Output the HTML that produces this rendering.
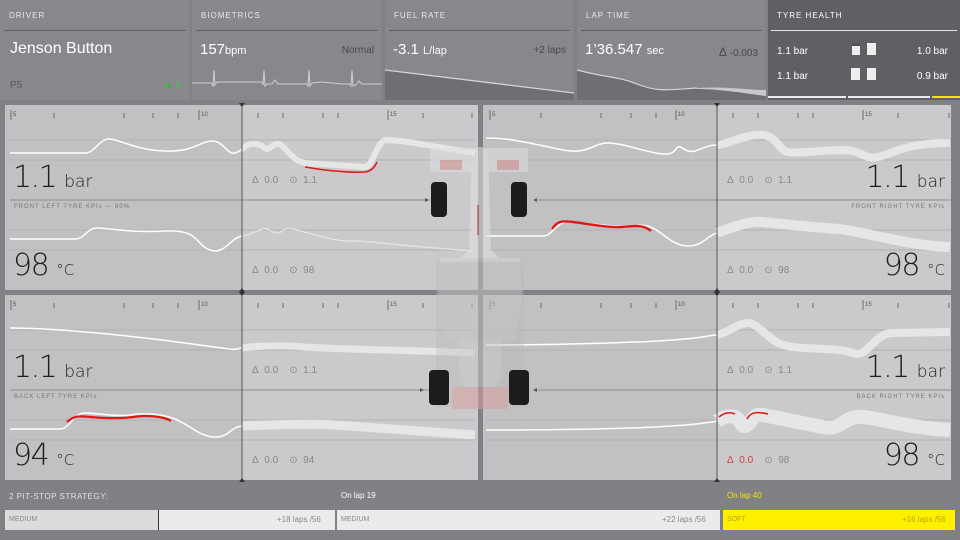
<!DOCTYPE html>
<html><head><meta charset="utf-8"><style>
*{margin:0;padding:0;box-sizing:border-box}
body{width:960px;height:540px;background:#808184;font-family:"Liberation Sans","DejaVu Sans",sans-serif;position:relative;overflow:hidden;color:#fff}
.a{position:absolute;white-space:nowrap}
.hd{position:absolute;top:0;height:100px;background:#87888b}
.hl{position:absolute;left:4px;right:4px;top:30px;height:1px;background:#606164}
.lab{position:absolute;left:9px;top:11px;font-size:8px;letter-spacing:1px;color:#e8e8e8}
.g{color:#1e1e1e;font-weight:200;font-family:"DejaVu Sans","Liberation Sans",sans-serif;letter-spacing:-1.5px}
.g span{letter-spacing:0}
</style></head><body>

<!-- header -->
<div class="hd" style="left:0;width:190px"><div class="hl"></div><div class="lab">DRIVER</div>
<div class="a" style="left:10px;top:40px;font-size:16px">Jenson Button</div>
<div class="a" style="left:10px;top:80px;font-size:10px;color:#5a5a5c">P5</div>
<div class="a" style="left:164px;top:80px;font-size:9px;color:#28c028">▲ <span style="color:#3bd03b">4</span></div></div>
<div class="hd" style="left:192px;width:190px"><div class="hl"></div><div class="lab">BIOMETRICS</div>
<div class="a" style="left:8px;top:41px;font-size:15px">157<span style="font-size:11px">bpm</span></div>
<div class="a" style="right:8px;top:45px;font-size:10px;color:#4a4a4c">Normal</div>
<svg class="a" style="left:0;top:65px" width="190" height="30"><path d="M0,18 L20,18 L21,22 L22,5 L23,20 L25,17 L70,17 L71,20 L72,5 L73,21 L75,19 L80,19 L83,15 L86,19 L115,19 L116,21 L117,5 L118,21 L120,18 L130,17 L150,19 L158,19 L159,21 L160,5 L161,21 L164,20 L167,16 L170,19 L190,19" fill="none" stroke="#cfcfd1" stroke-width="1"/></svg></div>
<div class="hd" style="left:385px;width:189px"><div class="hl"></div><div class="lab">FUEL RATE</div>
<div class="a" style="left:8px;top:41px;font-size:15px">-3.1 <span style="font-size:11px">L/lap</span></div>
<div class="a" style="right:8px;top:45px;font-size:10px;color:#4a4a4c">+2 laps</div>
<svg class="a" style="left:0;top:68px" width="189" height="32"><path d="M0,2 L189,25 L189,32 L0,32Z" fill="#6e6f72"/><path d="M0,2 L189,25" stroke="#d5d5d7" stroke-width="1.3"/></svg></div>
<div class="hd" style="left:577px;width:189px"><div class="hl"></div><div class="lab">LAP TIME</div>
<div class="a" style="left:8px;top:41px;font-size:15px">1’36.547 <span style="font-size:11px">sec</span></div>
<div class="a" style="right:8px;top:45px;font-size:10px;color:#4a4a4c"><span style="font-size:12px">Δ</span> -0.003</div>
<svg class="a" style="left:0;top:68px" width="189" height="32"><path d="M0,2 C30,10 40,8 60,16 S90,22 120,20 S160,24 189,28 L189,32 L0,32Z" fill="#6e6f72"/><path d="M120,20 C150,18 170,22 189,22 L189,28 C160,24 140,21 120,21Z" fill="#c9c9cb"/><path d="M0,2 C30,10 40,8 60,16 S90,22 120,20" fill="none" stroke="#d5d5d7" stroke-width="1.2"/></svg></div>
<div class="hd" style="left:768px;width:192px;background:#5f6063"><div class="hl" style="background:#e5e5e5;left:3px;right:3px"></div><div class="lab" style="color:#fff">TYRE HEALTH</div>
<div class="a" style="left:9px;top:46px;font-size:10px">1.1 bar</div><div class="a" style="right:12px;top:46px;font-size:10px">1.0 bar</div>
<div class="a" style="left:9px;top:71px;font-size:10px">1.1 bar</div><div class="a" style="right:12px;top:71px;font-size:10px">0.9 bar</div>
<div class="a" style="left:84px;top:43px;width:8px;height:12px;background:#eee;border-top:3px solid #555"></div>
<div class="a" style="left:99px;top:43px;width:9px;height:12px;background:#eee"></div>
<div class="a" style="left:83px;top:68px;width:9px;height:12px;background:#eee"></div>
<div class="a" style="left:99px;top:68px;width:9px;height:12px;background:#eee"></div>
<div class="a" style="left:0;top:96px;width:78px;height:2px;background:#eee"></div>
<div class="a" style="left:80px;top:96px;width:82px;height:2px;background:#eee"></div>
<div class="a" style="left:164px;top:96px;width:28px;height:2px;background:#f2e600"></div></div>

<!-- middle -->
<svg class="a" style="left:0;top:0" width="960" height="540">
<defs>
<clipPath id="cl"><rect x="0" y="0" width="237" height="200"/></clipPath>
<clipPath id="cr"><rect x="237" y="0" width="300" height="200"/></clipPath>
<clipPath id="rl"><rect x="0" y="0" width="234" height="200"/></clipPath>
<clipPath id="rr"><rect x="234" y="0" width="300" height="200"/></clipPath>
<g id="gridL">
<rect x="0" y="0" width="237" height="185" fill="#c1c1c3"/><rect x="237" y="0" width="236" height="185" fill="#cacacc"/>
<g stroke="#b3b3b5" stroke-width="1"><line x1="5" y1="35" x2="470" y2="35"/><line x1="5" y1="55" x2="470" y2="55"/><line x1="5" y1="125" x2="470" y2="125"/><line x1="5" y1="145" x2="470" y2="145"/></g>
<line x1="5" y1="95" x2="425" y2="95" stroke="#8a8a8c"/>
<g stroke="#555" stroke-width="0.8"><line x1="6" y1="5" x2="6" y2="15"/><line x1="49" y1="8" x2="49" y2="13"/><line x1="119" y1="8" x2="119" y2="13"/><line x1="148" y1="8" x2="148" y2="13"/><line x1="173" y1="8" x2="173" y2="13"/><line x1="194" y1="5" x2="194" y2="15"/><line x1="253" y1="8" x2="253" y2="13"/><line x1="278" y1="8" x2="278" y2="13"/><line x1="318" y1="8" x2="318" y2="13"/><line x1="333" y1="8" x2="333" y2="13"/><line x1="383" y1="5" x2="383" y2="15"/><line x1="418" y1="8" x2="418" y2="13"/><line x1="467" y1="8" x2="467" y2="13"/></g>
<g font-size="6" fill="#555"><text x="8" y="11">5</text><text x="196" y="11">10</text><text x="385" y="11">15</text></g>
</g>
<g id="gridR">
<rect x="0" y="0" width="234" height="185" fill="#c1c1c3"/><rect x="234" y="0" width="234" height="185" fill="#cacacc"/>
<g stroke="#b3b3b5" stroke-width="1"><line x1="3" y1="35" x2="468" y2="35"/><line x1="3" y1="55" x2="468" y2="55"/><line x1="3" y1="125" x2="468" y2="125"/><line x1="3" y1="145" x2="468" y2="145"/></g>
<line x1="55" y1="95" x2="468" y2="95" stroke="#8a8a8c"/>
<g stroke="#555" stroke-width="0.8"><line x1="7" y1="5" x2="7" y2="15"/><line x1="58" y1="8" x2="58" y2="13"/><line x1="118" y1="8" x2="118" y2="13"/><line x1="148" y1="8" x2="148" y2="13"/><line x1="173" y1="8" x2="173" y2="13"/><line x1="193" y1="5" x2="193" y2="15"/><line x1="250" y1="8" x2="250" y2="13"/><line x1="275" y1="8" x2="275" y2="13"/><line x1="315" y1="8" x2="315" y2="13"/><line x1="330" y1="8" x2="330" y2="13"/><line x1="380" y1="5" x2="380" y2="15"/><line x1="415" y1="8" x2="415" y2="13"/><line x1="466" y1="8" x2="466" y2="13"/></g>
<g font-size="6" fill="#555"><text x="9" y="11">5</text><text x="195" y="11">10</text><text x="382" y="11">15</text></g>
</g>
</defs>

<!-- panel FL -->
<g transform="translate(5,105)"><use href="#gridL"/>
<path d="M5,48 L80,48 C90,48 94,34 104,34 S130,45 160,46 S195,36 207,36 S222,50 230,48 S240,38 250,39 S258,44 262,44 S270,36 276,40 S288,56 300,58 L360,62 C368,62 370,40 380,35 C400,35 430,42 470,48" fill="none" stroke="#fff" stroke-width="1.5" clip-path="url(#cl)"/>
<path d="M5,48 L80,48 C90,48 94,34 104,34 S130,45 160,46 S195,36 207,36 S222,50 230,48 S240,38 250,39 S258,44 262,44 S270,36 276,40 S288,56 300,58 L360,62 C368,62 370,40 380,35 C400,35 430,42 470,48" fill="none" stroke="#e6e6e8" stroke-width="6" clip-path="url(#cr)"/>
<path d="M300,62 Q335,68 360,67 Q368,66 372,57" fill="none" stroke="#e01818" stroke-width="1.6"/>
<path d="M5,134 L70,134 C80,134 82,123 92,123 S125,128 160,126 S190,140 205,145 S225,133 237,131 S258,122 262,124 S272,130 276,127 S282,123 288,124 S330,137 345,136 S380,140 470,146" fill="none" stroke="#fff" stroke-width="1.5" clip-path="url(#cl)"/>
<path d="M5,134 L70,134 C80,134 82,123 92,123 S125,128 160,126 S190,140 205,145 S225,133 237,131 S258,122 262,124 S272,130 276,127 S282,123 288,124 S330,137 345,136 S380,140 470,146" fill="none" stroke="#e4e4e6" stroke-width="1.3" clip-path="url(#cr)"/>
</g>
<!-- panel BL -->
<g transform="translate(5,295)"><use href="#gridL"/>
<path d="M5,33 C50,33 120,40 180,48 S225,55 237,53 S280,50 300,52 S400,55 470,58" fill="none" stroke="#fff" stroke-width="1.5" clip-path="url(#cl)"/>
<path d="M5,33 C50,33 120,40 180,48 S225,55 237,53 S280,50 300,52 S400,55 470,58" fill="none" stroke="#e6e6e8" stroke-width="7" clip-path="url(#cr)"/>
<path d="M5,134 L55,134 C65,134 68,118 80,118 S110,122 125,120 S155,118 170,124 S195,142 210,142 S225,132 237,131 S300,128 330,130 S400,135 470,140" fill="none" stroke="#fff" stroke-width="1.5" clip-path="url(#cl)"/>
<path d="M62,127 C70,120 75,121 85,122 S115,124 128,122 S158,121 166,126" fill="none" stroke="#e01818" stroke-width="2.2"/>
<path d="M237,131 S300,128 330,130 S400,135 470,140" fill="none" stroke="#e6e6e8" stroke-width="9"/>
</g>
<!-- panel FR -->
<g transform="translate(483,105)"><use href="#gridR"/>
<path d="M3,33 C30,33 55,40 80,45 S110,38 125,38 S165,48 180,49 S192,40 197,42 S205,48 212,46 S225,40 234,40 S265,28 280,30 S295,45 305,47 S340,45 360,45 S380,55 395,52 S420,38 467,38" fill="none" stroke="#fff" stroke-width="1.5" clip-path="url(#rl)"/>
<path d="M3,33 C30,33 55,40 80,45 S110,38 125,38 S165,48 180,49 S192,40 197,42 S205,48 212,46 S225,40 234,40 S265,28 280,30 S295,45 305,47 S340,45 360,45 S380,55 395,52 S420,38 467,38" fill="none" stroke="#e6e6e8" stroke-width="8" clip-path="url(#rr)"/>
<path d="M3,131 L60,131 C70,131 72,117 85,117 S120,121 135,121 S160,118 170,123 S190,141 205,141 S225,130 234,128 S265,115 280,117 S330,122 355,124 S420,140 467,142" fill="none" stroke="#fff" stroke-width="1.5" clip-path="url(#rl)"/>
<path d="M69,124 C75,115 80,116 90,117 S125,123 138,122 S160,119 168,126" fill="none" stroke="#e01818" stroke-width="2.4"/>
<path d="M234,128 S265,115 280,117 S330,122 355,124 S420,140 467,142" fill="none" stroke="#e6e6e8" stroke-width="10"/>
</g>
<!-- panel BR -->
<g transform="translate(483,295)"><use href="#gridR"/>
<path d="M3,50 C60,50 150,48 190,45 S225,40 234,40 C245,38 255,28 265,28 S285,45 300,50 S355,52 370,58 S390,38 410,38 L467,37" fill="none" stroke="#fff" stroke-width="1.5" clip-path="url(#rl)"/>
<path d="M3,50 C60,50 150,48 190,45 S225,40 234,40 C245,38 255,28 265,28 S285,45 300,50 S355,52 370,58 S390,38 410,38 L467,37" fill="none" stroke="#e6e6e8" stroke-width="8" clip-path="url(#rr)"/>
<path d="M3,135 C100,135 200,133 234,126" fill="none" stroke="#fff" stroke-width="1.5"/>
<path d="M234,126 C240,122 246,120 252,122 S258,134 264,130 S270,118 280,120 S320,128 340,132 S360,120 380,122 S420,132 467,135" fill="none" stroke="#e6e6e8" stroke-width="14"/>
<path d="M236,122 C242,117 248,117 252,119 M264,124 C268,116 275,117 285,119" fill="none" stroke="#e01818" stroke-width="1.6"/>
</g>

<!-- dividers -->
<rect x="478" y="100" width="5" height="385" fill="#808184"/>
<rect x="0" y="290" width="960" height="5" fill="#808184"/>
<line x1="242" y1="103" x2="242" y2="482" stroke="#555" stroke-width="1"/>
<line x1="717" y1="103" x2="717" y2="482" stroke="#555" stroke-width="1"/>
<g fill="#333"><path d="M239,103 L245,103 L242,107Z"/><path d="M714,103 L720,103 L717,107Z"/><path d="M239,292 L245,292 L242,288Z M239,292 L245,292 L242,296Z"/><path d="M714,292 L720,292 L717,288Z M714,292 L720,292 L717,296Z"/><path d="M239,482 L245,482 L242,478Z"/><path d="M714,482 L720,482 L717,478Z"/></g>

<!-- car -->
<g opacity="0.55">
<rect x="430" y="148" width="98" height="24" fill="#dedee0"/>
<rect x="440" y="160" width="22" height="10" fill="#d89090"/><rect x="497" y="160" width="22" height="10" fill="#d89090"/>
<path d="M472,150 C478,146 482,146 488,150 L491,250 L500,258 L505,290 L500,380 L490,392 L470,392 L460,380 L455,290 L460,258 L469,250Z" fill="#e2e2e4"/>
<path d="M440,258 L520,258 L522,300 L515,340 L445,340 L438,300Z" fill="#d5d5d7"/>
<rect x="436" y="262" width="88" height="145" fill="#b5b5b7" opacity="0.6"/>
<rect x="452" y="387" width="56" height="22" fill="#d8a0a0"/>
<line x1="478" y1="205" x2="478" y2="235" stroke="#c05050" stroke-width="2"/>
</g>
<g fill="#1c1c1e"><rect x="431" y="182" width="16" height="35" rx="4"/><rect x="511" y="182" width="16" height="35" rx="4"/><rect x="429" y="370" width="20" height="35" rx="4"/><rect x="509" y="370" width="20" height="35" rx="4"/></g>
<g fill="#555"><path d="M425,198 L429,200 L425,202Z"/><path d="M537,198 L533,200 L537,202Z"/><path d="M420,388 L424,390 L420,392Z"/><path d="M537,388 L533,390 L537,392Z"/></g>
</svg>

<!-- panel texts -->
<div class="a g" style="left:13px;top:160px;font-size:30px">1.1 <span style="font-size:17px">bar</span></div>
<div class="a" style="left:14px;top:204px;font-size:6px;letter-spacing:1px;color:#777">FRONT LEFT TYRE KPIs — 80%</div>
<div class="a g" style="left:13px;top:248px;font-size:30px">98 <span style="font-size:15px">°C</span></div>
<div class="a" style="left:252px;top:175px;font-size:10px;color:#888">Δ&nbsp; 0.0 &nbsp;&nbsp; ⊙&nbsp; 1.1</div>
<div class="a" style="left:252px;top:265px;font-size:10px;color:#888">Δ&nbsp; 0.0 &nbsp;&nbsp; ⊙&nbsp; 98</div>

<div class="a g" style="right:15px;top:160px;font-size:30px">1.1 <span style="font-size:17px">bar</span></div>
<div class="a" style="right:15px;top:204px;font-size:6px;letter-spacing:1px;color:#777">FRONT RIGHT TYRE KPIs</div>
<div class="a g" style="right:15px;top:248px;font-size:30px">98 <span style="font-size:15px">°C</span></div>
<div class="a" style="left:727px;top:175px;font-size:10px;color:#888">Δ&nbsp; 0.0 &nbsp;&nbsp; ⊙&nbsp; 1.1</div>
<div class="a" style="left:727px;top:265px;font-size:10px;color:#888">Δ&nbsp; 0.0 &nbsp;&nbsp; ⊙&nbsp; 98</div>

<div class="a g" style="left:13px;top:350px;font-size:30px">1.1 <span style="font-size:17px">bar</span></div>
<div class="a" style="left:14px;top:394px;font-size:6px;letter-spacing:1px;color:#777">BACK LEFT TYRE KPIs</div>
<div class="a g" style="left:13px;top:438px;font-size:30px">94 <span style="font-size:15px">°C</span></div>
<div class="a" style="left:252px;top:365px;font-size:10px;color:#888">Δ&nbsp; 0.0 &nbsp;&nbsp; ⊙&nbsp; 1.1</div>
<div class="a" style="left:252px;top:455px;font-size:10px;color:#888">Δ&nbsp; 0.0 &nbsp;&nbsp; ⊙&nbsp; 94</div>

<div class="a g" style="right:15px;top:350px;font-size:30px">1.1 <span style="font-size:17px">bar</span></div>
<div class="a" style="right:15px;top:394px;font-size:6px;letter-spacing:1px;color:#777">BACK RIGHT TYRE KPIs</div>
<div class="a g" style="right:15px;top:438px;font-size:30px">98 <span style="font-size:15px">°C</span></div>
<div class="a" style="left:727px;top:365px;font-size:10px;color:#888">Δ&nbsp; 0.0 &nbsp;&nbsp; ⊙&nbsp; 1.1</div>
<div class="a" style="left:727px;top:455px;font-size:10px;color:#888"><span style="color:#d04040">Δ&nbsp; 0.0</span> &nbsp;&nbsp; ⊙&nbsp; 98</div>

<!-- bottom strategy -->
<div class="a" style="left:9px;top:492px;font-size:8px;color:#e0e0e0;letter-spacing:.5px">2 PIT-STOP STRATEGY:</div>
<div class="a" style="left:341px;top:491px;font-size:8px;color:#fff">On lap 19</div>
<div class="a" style="left:727px;top:491px;font-size:8px;color:#f2e600">On lap 40</div>
<div class="a" style="left:5px;top:510px;width:330px;height:20px;background:#ebebeb"></div>
<div class="a" style="left:5px;top:510px;width:154px;height:20px;background:#dcdcdd"></div>
<div class="a" style="left:158px;top:510px;width:1px;height:20px;background:#333"></div>
<div class="a" style="left:9px;top:516px;font-size:7px;color:#888">MEDIUM</div>
<div class="a" style="left:277px;top:515px;font-size:8px;color:#888">+18 laps /56</div>
<div class="a" style="left:337px;top:510px;width:383px;height:20px;background:#ebebeb"></div>
<div class="a" style="left:341px;top:516px;font-size:7px;color:#888">MEDIUM</div>
<div class="a" style="left:662px;top:515px;font-size:8px;color:#888">+22 laps /56</div>
<div class="a" style="left:723px;top:510px;width:232px;height:20px;background:#fff000"></div>
<div class="a" style="left:727px;top:516px;font-size:7px;color:#b8a800">SOFT</div>
<div class="a" style="left:902px;top:515px;font-size:8px;color:#b8a800">+16 laps /56</div>
</body></html>
